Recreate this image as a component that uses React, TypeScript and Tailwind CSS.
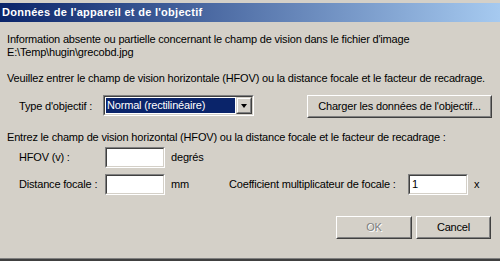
import React from 'react';

const FONT = { fontFamily: '"Liberation Sans", Arial, sans-serif' };

const Sunken: React.FC<{ className?: string; children?: React.ReactNode }> = ({ className = '', children }) => (
  <div className={`shrink-0 border border-t-[#808080] border-l-[#808080] border-b-white border-r-white ${className}`}>
    <div className="w-full h-full border border-t-[#404040] border-l-[#404040] border-b-[#d4d0c8] border-r-[#d4d0c8] bg-white flex items-center">
      {children}
    </div>
  </div>
);

const Button: React.FC<{ className?: string; disabled?: boolean; children: React.ReactNode }> = ({ className = '', disabled, children }) => (
  <div className={`shrink-0 border border-t-white border-l-white border-b-[#404040] border-r-[#404040] ${className}`}>
    <div className="w-full h-full border border-t-[#d4d0c8] border-l-[#d4d0c8] border-b-[#808080] border-r-[#808080] flex items-center justify-center">
      {disabled ? (
        <span className="text-[#808080] [text-shadow:1px_1px_0_#fff]">{children}</span>
      ) : (
        <span>{children}</span>
      )}
    </div>
  </div>
);

export default function App() {
  return (
    <div
      className="w-[500px] h-[261px] bg-[#d4d0c8] flex flex-col text-[11px] leading-[13px] tracking-[-0.18px] text-black whitespace-nowrap overflow-hidden"
      style={FONT}
    >
      {/* Title bar */}
      <div className="mt-[3px] h-[19px] shrink-0 flex items-center pl-[2px] bg-[linear-gradient(to_right,#0a246a,#a6caf0)]">
        <span className="text-white font-bold text-[11px] tracking-[0.28px]">Données de l'appareil et de l'objectif</span>
      </div>

      <div className="flex-1 flex flex-col pl-[7px] pr-[8px]">
        <div className="mt-[11px]">Information absente ou partielle concernant le champ de vision dans le fichier d'image</div>
        <div>E:\Temp\hugin\grecobd.jpg</div>

        <div className="mt-[13px]">Veuillez entrer le champ de vision horizontale (HFOV) ou la distance focale et le facteur de recadrage.</div>

        {/* Lens type row */}
        <div className="mt-[10px] flex items-start h-[23px]">
          <div className="w-[96px] pl-[12px] pt-[5px]">Type d'objectif :</div>
          <div className="w-[151px] h-[21px] border border-t-[#808080] border-l-[#808080] border-b-white border-r-white">
            <div className="w-full h-full border border-t-[#404040] border-l-[#404040] border-b-[#d4d0c8] border-r-[#d4d0c8] bg-white flex items-stretch">
              <div className="flex-1 m-[1px] bg-[#0a246a] text-white flex items-center pl-[1px]">Normal (rectilinéaire)</div>
              <div className="w-[16px] border border-t-[#d4d0c8] border-l-[#d4d0c8] border-b-[#404040] border-r-[#404040] bg-[#d4d0c8]">
                <div className="w-full h-full border border-t-white border-l-white border-b-[#808080] border-r-[#808080] flex items-center justify-center">
                  <div className="w-0 h-0 border-l-[3.5px] border-r-[3.5px] border-t-[4px] border-l-transparent border-r-transparent border-t-black" />
                </div>
              </div>
            </div>
          </div>
          <Button className="ml-auto w-[185px] h-[23px]">Charger les données de l'objectif...</Button>
        </div>

        <div className="mt-[13px]">Entrez le champ de vision horizontal (HFOV) ou la distance focale et le facteur de recadrage :</div>

        {/* HFOV row */}
        <div className="mt-[3px] flex items-center h-[21px]">
          <div className="w-[98px] pl-[12px]">HFOV (v) :</div>
          <Sunken className="w-[60px] h-[21px]" />
          <div className="ml-[6px]">degrés</div>
        </div>

        {/* Focal length row */}
        <div className="mt-[6px] flex items-center h-[21px]">
          <div className="w-[98px] pl-[12px]">Distance focale :</div>
          <Sunken className="w-[60px] h-[21px]" />
          <div className="ml-[6px] w-[58px]">mm</div>
          <div className="w-[179px]">Coefficient multiplicateur de focale :</div>
          <Sunken className="w-[60px] h-[21px]">
            <span className="pl-[2px]">1</span>
          </Sunken>
          <div className="ml-[6px]">x</div>
        </div>

        {/* Dialog buttons */}
        <div className="mt-[21px] flex justify-end gap-[4px] pr-[1px]">
          <Button disabled className="w-[76px] h-[23px]">OK</Button>
          <Button className="w-[75px] h-[23px]">Cancel</Button>
        </div>
      </div>

      <div className="h-px bg-[#808080] shrink-0" />
      <div className="h-[2px] bg-[#404040] shrink-0" />
    </div>
  );
}
